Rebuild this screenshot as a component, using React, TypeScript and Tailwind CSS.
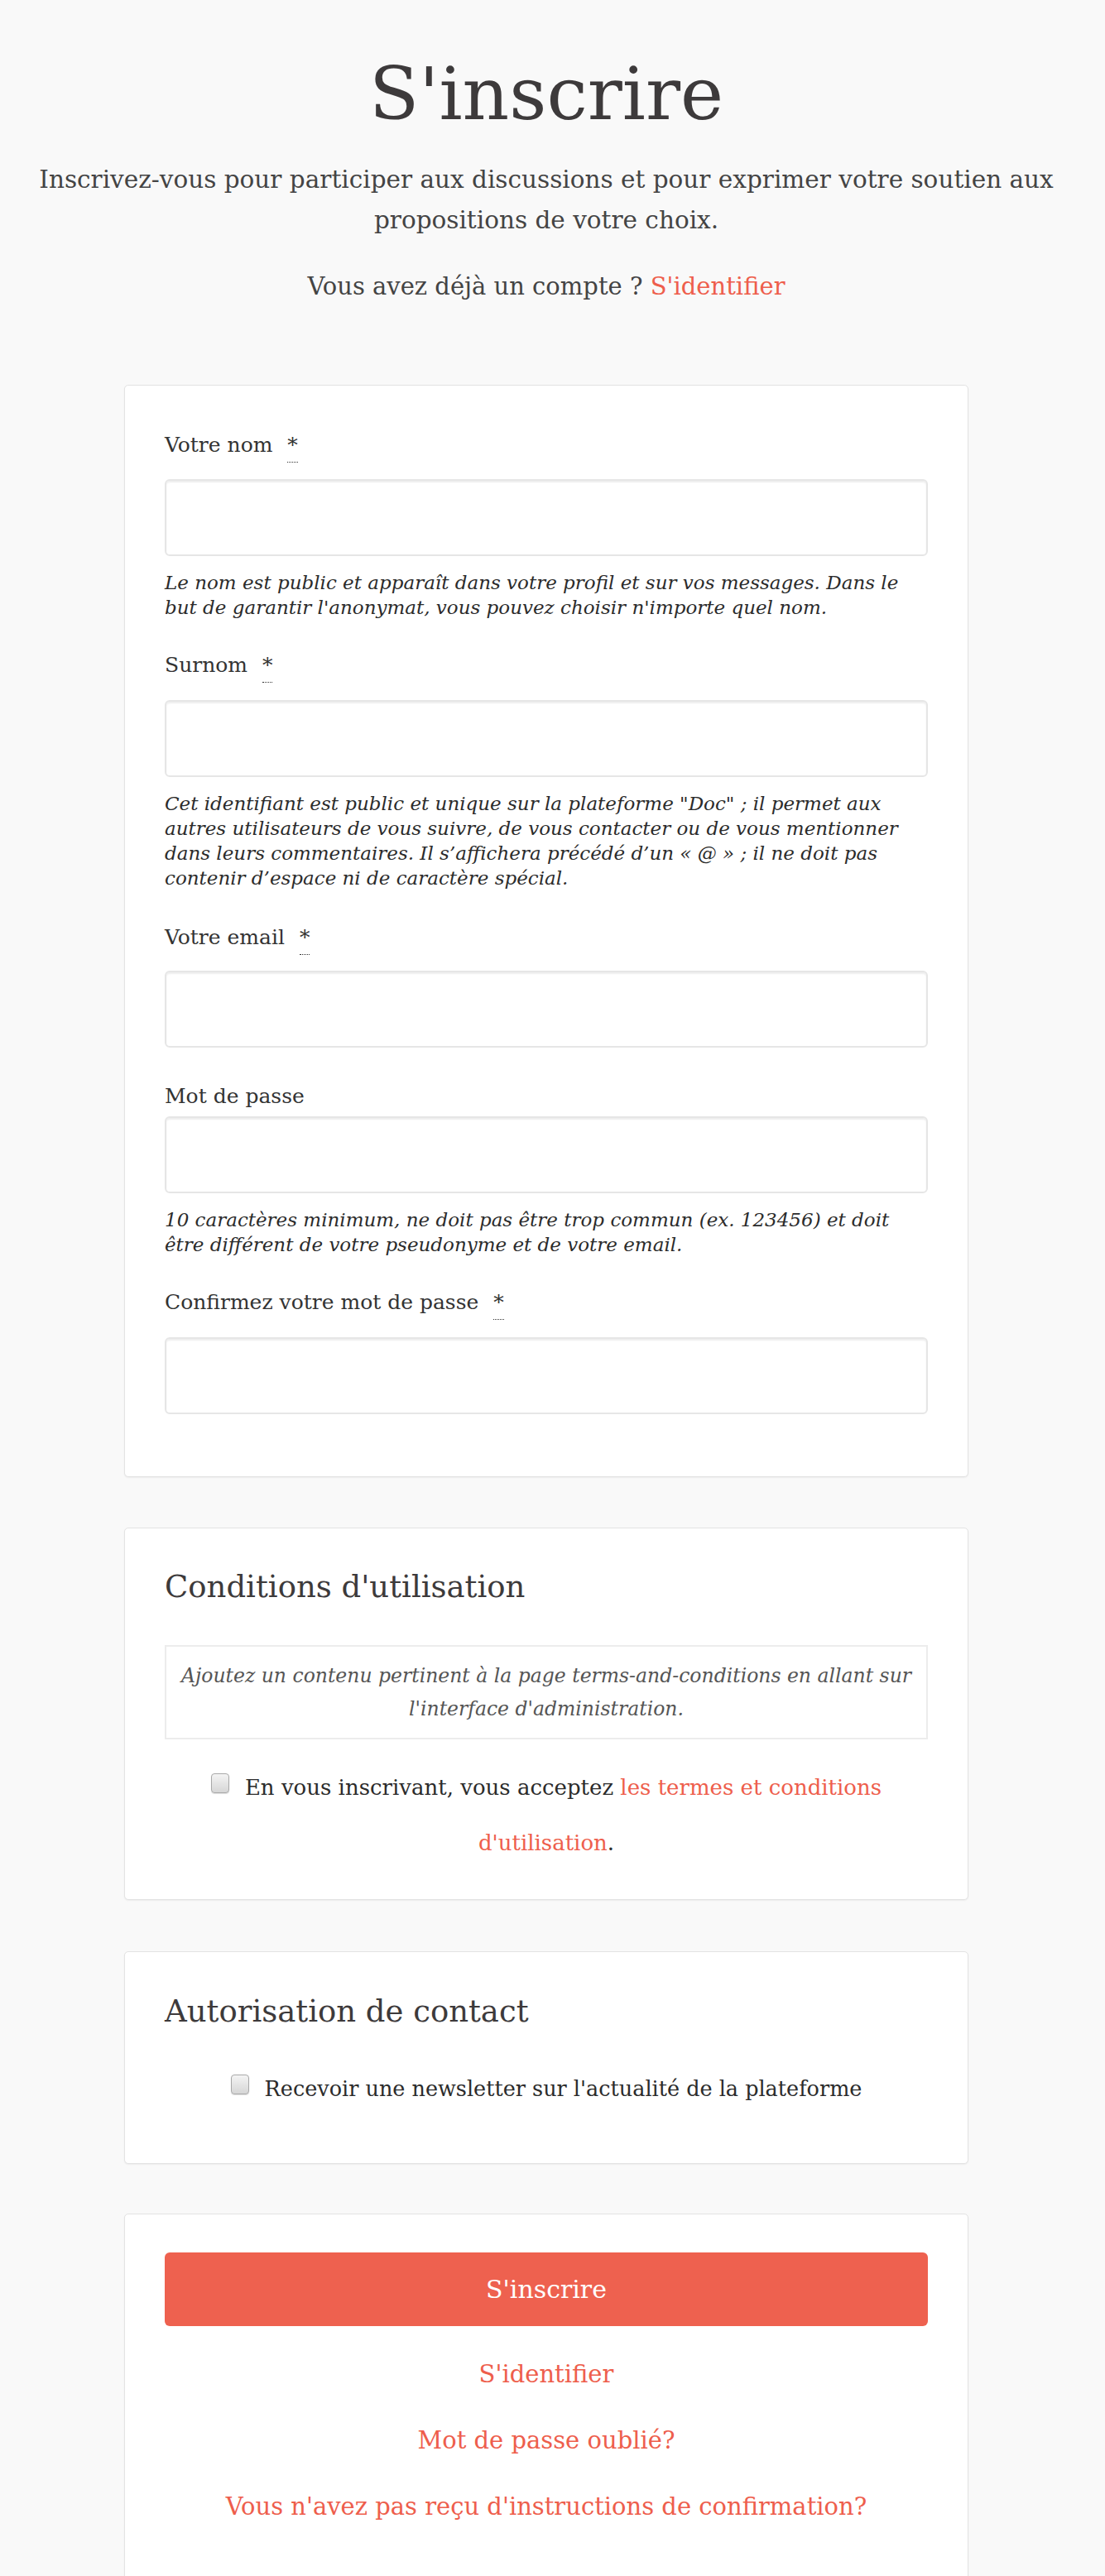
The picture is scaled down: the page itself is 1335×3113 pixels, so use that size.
import React from 'react';

const Req = () => (
  <abbr
    title="requis"
    className="ml-[10px] no-underline relative inline-block"
  >
    *
    <span className="absolute left-0 right-0 top-[40px] border-b border-dotted border-[#333]" />
  </abbr>
);

const Checkbox = () => (
  <span className="inline-block align-[2px] mr-[19px] w-[22px] h-[24px] rounded-[4px] border border-[#a8a8a8] bg-linear-to-b from-[#f4f4f4] to-[#d6d6d6] shadow-[0_1px_1px_rgba(0,0,0,0.12)]" />
);

const Input = ({ type = 'text' }: { type?: string }) => (
  <input
    type={type}
    className="block w-full h-[93px] rounded-[6px] border-2 border-[#e6e6e6] bg-white shadow-[inset_0_2px_2px_rgba(0,0,0,0.07)] outline-none"
  />
);

const Card = ({ className = '', children }: { className?: string; children: React.ReactNode }) => (
  <div className={`w-[1020px] mx-auto bg-white border border-[#e3e3e3] rounded-[5px] shadow-[0_1px_2px_rgba(0,0,0,0.06)] px-[48px] ${className}`}>
    {children}
  </div>
);

export default function App() {
  const font = "font-['DejaVu_Serif',serif]";
  return (
    <div className={`min-h-screen bg-[#f9f9f9] ${font} text-[#333]`}>
      <div className="w-[1320px] pb-[40px]">
        <div className="text-center pt-[61px]">
          <h1 className="text-[88px] leading-[106px] text-[#3d3a3b]">S'inscrire</h1>
          <p className="mt-[26px] text-[29.5px] leading-[49px] text-[#444] px-[40px]">
            Inscrivez-vous pour participer aux discussions et pour exprimer votre soutien aux propositions de votre choix.
          </p>
          <p className="mt-[31px] text-[29px] leading-[49px] text-[#444]">
            Vous avez déjà un compte ? <a className="text-[#ee5e4c]">S'identifier</a>
          </p>
        </div>

        <Card className="mt-[94px] pt-[52px] pb-[75px]">
          <label className="block text-[25px] leading-[40px] mb-[21px]">
            Votre nom <Req />
          </label>
          <Input />
          <p className="mt-[17px] text-[23px] leading-[30px] italic text-[#2b2b2b]">
            Le nom est public et apparaît dans votre profil et sur vos messages. Dans le but de garantir l'anonymat, vous pouvez choisir n'importe quel nom.
          </p>

          <label className="block mt-[35px] text-[25px] leading-[40px] mb-[22px]">
            Surnom <Req />
          </label>
          <Input />
          <p className="mt-[17px] text-[23px] leading-[30px] italic text-[#2b2b2b]">
            Cet identifiant est public et unique sur la plateforme "Doc" ; il permet aux autres utilisateurs de vous suivre, de vous contacter ou de vous mentionner dans leurs commentaires. Il s’affichera précédé d’un « @ » ; il ne doit pas contenir d’espace ni de caractère spécial.
          </p>

          <label className="block mt-[37px] text-[25px] leading-[40px] mb-[20px]">
            Votre email <Req />
          </label>
          <Input type="email" />

          <label className="block mt-[39px] text-[25px] leading-[40px] mb-[4px]">
            Mot de passe
          </label>
          <Input type="password" />
          <p className="mt-[17px] text-[23px] leading-[30px] italic text-[#2b2b2b]">
            10 caractères minimum, ne doit pas être trop commun (ex. 123456) et doit être différent de votre pseudonyme et de votre email.
          </p>

          <label className="block mt-[35px] text-[25px] leading-[40px] mb-[22px]">
            Confirmez votre mot de passe <Req />
          </label>
          <Input type="password" />
        </Card>

        <Card className="mt-[61px] pt-[47px] pb-[34px]">
          <h2 className="text-[37px] leading-[48px] text-[#3d3a3b]">Conditions d'utilisation</h2>
          <div className="mt-[46px] border-2 border-[#ececec] px-[16px] py-[15px] text-center italic text-[23.5px] leading-[40px] text-[#555]">
            Ajoutez un contenu pertinent à la page terms-and-conditions en allant sur l'interface d'administration.
          </div>
          <p className="mt-[25px] text-center text-[26px] leading-[67px] text-[#2b2b2b]">
            <Checkbox />
            En vous inscrivant, vous acceptez <a className="text-[#ee5e4c]">les termes et conditions d'utilisation</a>.
          </p>
        </Card>

        <Card className="mt-[62px] pt-[48px] pb-[56px]">
          <h2 className="text-[37px] leading-[48px] text-[#3d3a3b]">Autorisation de contact</h2>
          <p className="mt-[36px] text-center text-[25.5px] leading-[67px] text-[#2b2b2b]">
            <Checkbox />
            Recevoir une newsletter sur l'actualité de la plateforme
          </p>
        </Card>

        <Card className="mt-[60px] pt-[46px] pb-[80px]">
          <button className="block w-full h-[89px] rounded-[6px] bg-[#ee614f] text-white text-[30px]">
            S'inscrire
          </button>
          <div className="mt-[38px] flex flex-col items-center gap-[40px] text-[29px] leading-[40px] text-[#ee5e4c]">
            <a>S'identifier</a>
            <a>Mot de passe oublié?</a>
            <a>Vous n'avez pas reçu d'instructions de confirmation?</a>
          </div>
        </Card>
      </div>
    </div>
  );
}
